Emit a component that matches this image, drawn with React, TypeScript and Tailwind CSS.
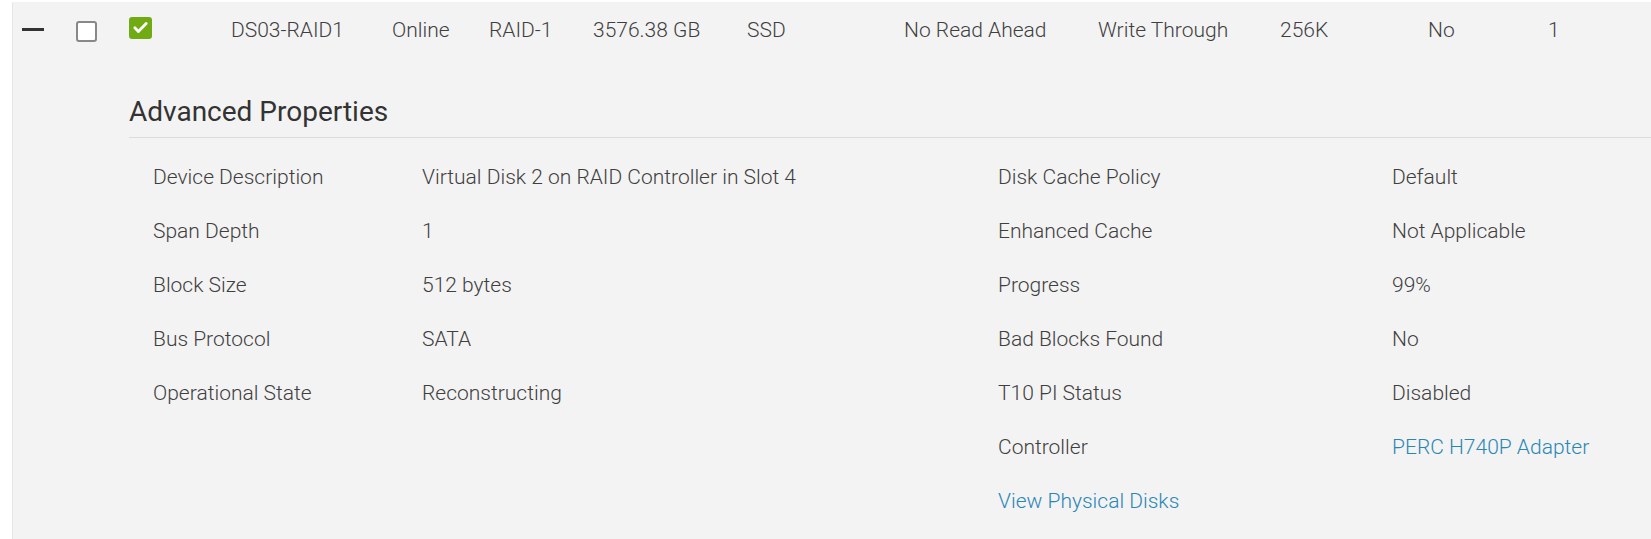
const rowCells = [
  { text: "DS03-RAID1", w: "w-[161px]" },
  { text: "Online", w: "w-[97px]" },
  { text: "RAID-1", w: "w-[104px]" },
  { text: "3576.38 GB", w: "w-[154px]" },
  { text: "SSD", w: "w-[157px]" },
  { text: "No Read Ahead", w: "w-[194px]" },
  { text: "Write Through", w: "w-[182px]" },
  { text: "256K", w: "w-[148px]" },
  { text: "No", w: "w-[120px]" },
  { text: "1", w: "w-[60px]" },
];

const leftProps = [
  ["Device Description", "Virtual Disk 2 on RAID Controller in Slot 4"],
  ["Span Depth", "1"],
  ["Block Size", "512 bytes"],
  ["Bus Protocol", "SATA"],
  ["Operational State", "Reconstructing"],
];

const rightProps = [
  ["Disk Cache Policy", "Default"],
  ["Enhanced Cache", "Not Applicable"],
  ["Progress", "99%"],
  ["Bad Blocks Found", "No"],
  ["T10 PI Status", "Disabled"],
];

export default function App() {
  return (
    <div className="w-full h-[539px] bg-white pt-[2px] font-['Roboto','Liberation_Sans',sans-serif] font-light text-[21px] text-[#3f3f3f] overflow-hidden">
      <div className="ml-[12px] h-full bg-[#f3f3f3] border-l border-[#e6e6e6]">
        {/* top row */}
        <div className="flex items-center h-[55px] whitespace-nowrap">
          <div className="w-[63px] pl-[9px] flex items-center">
            <div className="w-[22px] h-[3px] bg-[#333]" />
          </div>
          <div className="w-[53px] flex items-center pt-[4px]">
            <div className="w-[21px] h-[21px] border-[2.5px] border-[#888] rounded-[3px] bg-white" />
          </div>
          <div className="w-[102px] flex items-center pb-[4px]">
            <div className="w-[23px] h-[22px] rounded-[3px] bg-[#70ab13] flex items-center justify-center">
              <svg viewBox="0 0 24 24" className="w-[17px] h-[17px]" fill="none" stroke="white" strokeWidth="4" strokeLinecap="round" strokeLinejoin="round">
                <path d="M4 12.5l5 5L20 6.5" />
              </svg>
            </div>
          </div>
          {rowCells.map((c) => (
            <div key={c.text + c.w} className={`${c.w} leading-[28px]`}>
              {c.text}
            </div>
          ))}
        </div>

        {/* advanced properties */}
        <div className="ml-[116px] mt-[38px]">
          <h2 className="text-[28px] leading-[34px] font-normal text-[#333] pb-[8px] border-b border-[#dcdcdc]">
            Advanced Properties
          </h2>
          <div className="flex pt-[13px] pl-[24px]">
            <div className="w-[845px]">
              {leftProps.map(([k, v]) => (
                <div key={k} className="flex h-[54px] items-center">
                  <div className="w-[269px]">{k}</div>
                  <div>{v}</div>
                </div>
              ))}
            </div>
            <div>
              {rightProps.map(([k, v]) => (
                <div key={k} className="flex h-[54px] items-center">
                  <div className="w-[394px]">{k}</div>
                  <div>{v}</div>
                </div>
              ))}
              <div className="flex h-[54px] items-center">
                <div className="w-[394px]">Controller</div>
                <a className="text-[#2a87b5] cursor-pointer">PERC H740P Adapter</a>
              </div>
              <div className="flex h-[54px] items-center">
                <a className="text-[#2a87b5] cursor-pointer">View Physical Disks</a>
              </div>
            </div>
          </div>
        </div>
      </div>
    </div>
  );
}
